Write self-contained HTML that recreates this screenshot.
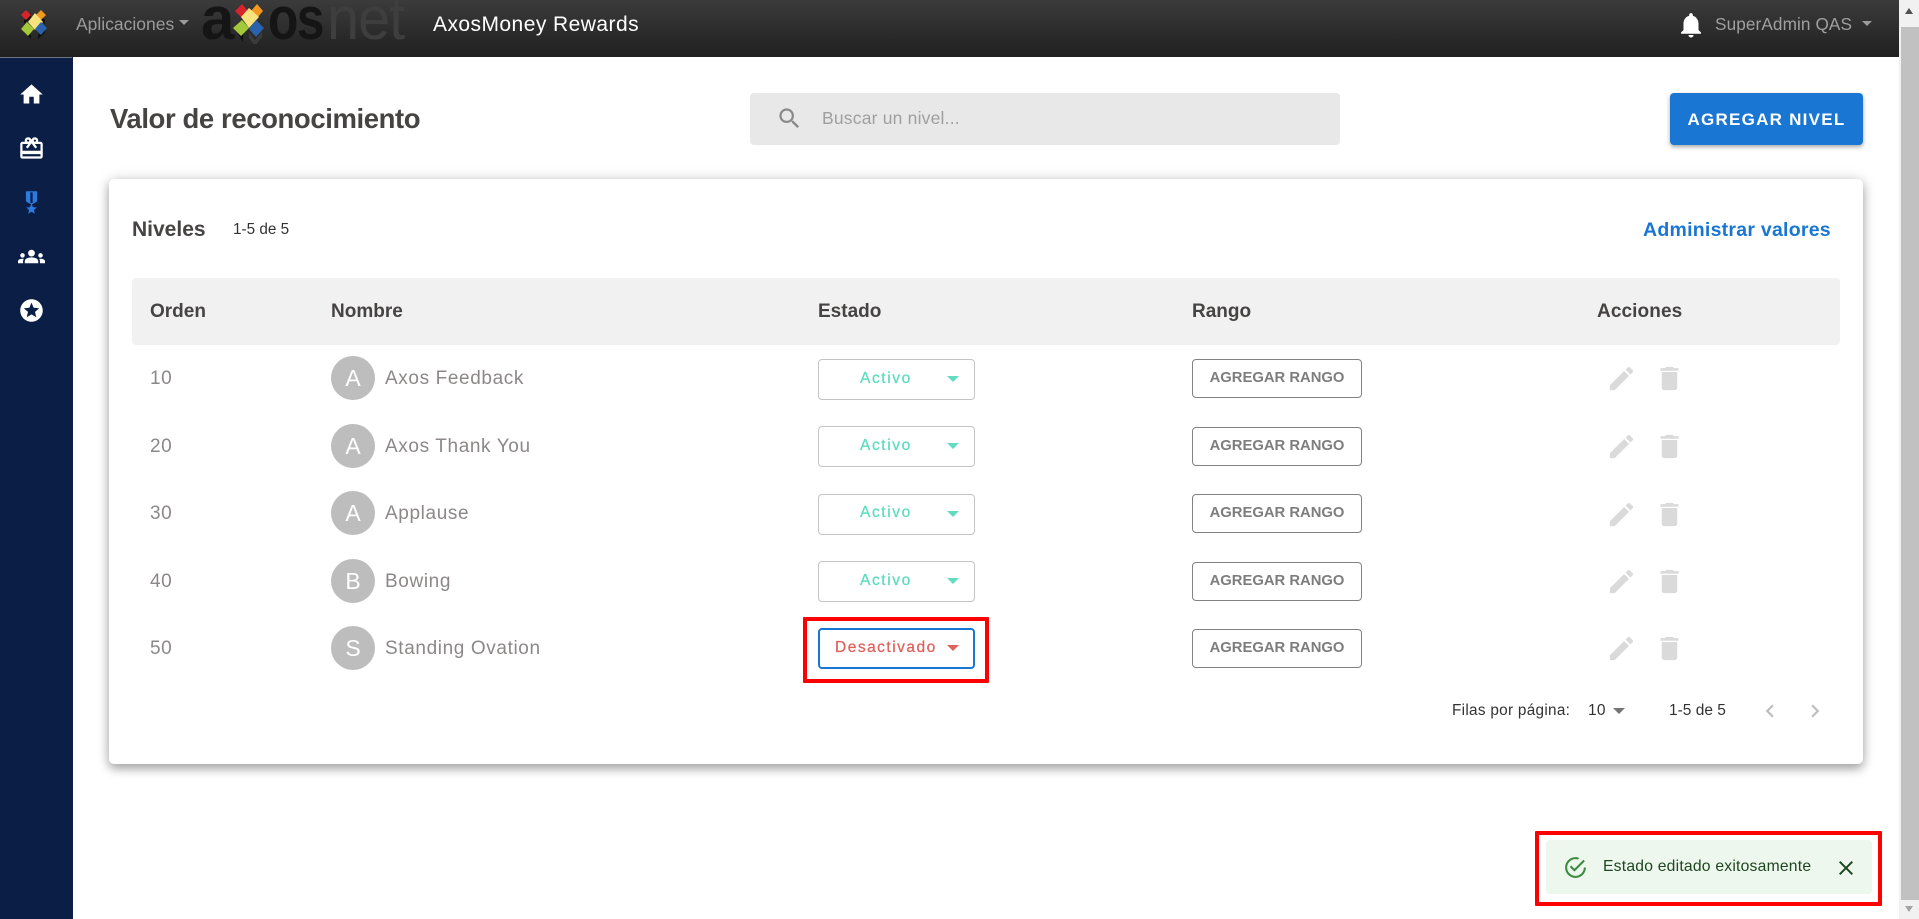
<!DOCTYPE html>
<html lang="es"><head><meta charset="utf-8"><title>AxosMoney Rewards</title>
<style>
html,body{margin:0;padding:0;width:1919px;height:919px;overflow:hidden;background:#fff;font-family:"Liberation Sans",sans-serif}
.a{position:absolute}
.t{position:absolute;white-space:nowrap;line-height:30px;height:30px}
svg{position:absolute;display:block}
.h{font-weight:bold;font-size:19px;color:#464343}
.n{font-size:19px;color:#8c8888;letter-spacing:.62px}
.av{position:absolute;left:331px;width:44px;height:44px;border-radius:50%;background:#bdbdbd;color:#fff;font-size:23px;line-height:44px;text-align:center}
.sel{position:absolute;left:818px;width:157px;height:41px;box-sizing:border-box;border:1.5px solid #c4c4c4;border-radius:4px}
.ac{font-size:15.5px;color:#5cdcbe;letter-spacing:1.6px;-webkit-text-stroke:.25px currentColor}
.car{position:absolute;width:0;height:0;border-left:6px solid transparent;border-right:6px solid transparent;border-top:6.5px solid #62dcc0}
.btn{position:absolute;left:1192px;width:170px;height:39px;box-sizing:border-box;border:1.5px solid #828282;border-radius:4px;color:#7d7d7d;font-weight:bold;font-size:14.8px;line-height:37px;text-align:center;white-space:nowrap}
</style></head><body>

<div class="a" style="left:0;top:0;width:1899px;height:57px;background:linear-gradient(#3b3b3b,#202020)"></div>
<div class="a" style="left:0;top:57px;width:73px;height:862px;background:#0a1e46"></div>
<div class="a" style="left:0;top:57px;width:72px;height:1px;background:#6f7480"></div>

<svg style="left:18px;top:8px" width="32" height="34" viewBox="0 0 32 34">
<g transform="translate(3,2)">
<polygon points="10,3 3,10 3,14 10,8" fill="#111"/><polygon points="17,3 24,10 24,14 17,8" fill="#111"/>
<polygon points="3,18 10,25 10,29 3,23" fill="#111"/><polygon points="24,18 17,25 17,29 24,23" fill="#111"/>
<polygon points="8,0 13,5 8,10 3,5" fill="#d9232a" transform="translate(-3,0)"/>
<polygon points="20,0 25,5 20,10 15,5" fill="#f29a1f"/>
<polygon points="14,3 22,12 14,20 7,12" fill="#f7e27e"/>
<polygon points="6,12 13,19 7,26 0,19" fill="#a3c93a"/>
<polygon points="20,12 26,18 20,25 14,19" fill="#2b62ad"/>
</g></svg>

<div class="t" style="left:76px;top:9px;font-size:17.5px;color:#9b9b9b">Aplicaciones</div>
<div class="car" style="left:179px;top:20px;border-top-color:#9b9b9b;border-left-width:5px;border-right-width:5px;border-top-width:5px"></div>

<div class="a" style="left:201px;top:-11px;font-size:60px;font-weight:bold;line-height:60px;color:#151515;letter-spacing:-1px">a</div>
<div class="a" style="left:268px;top:-11px;font-size:60px;font-weight:bold;line-height:60px;color:#151515;letter-spacing:-2px;transform-origin:left;transform:scaleX(.83)">os</div>
<div class="a" style="left:327px;top:-11px;font-size:60px;line-height:60px;color:#3e3e3e;letter-spacing:-1px;transform-origin:left;transform:scaleX(.96)">net</div>
<svg style="left:232px;top:4px" width="36" height="40" viewBox="0 0 36 40">
<polygon points="5,20 11,30 11,38 5,28" fill="#0e0e0e"/><polygon points="17,28 23,36 30,28 30,33 23,42 17,34" fill="#3b3b3b"/>
<polygon points="10,0 16,7 10,14 3,7" fill="#d9232a"/>
<polygon points="25,0 31,7 25,14 19,7" fill="#f29a1f"/>
<polygon points="17,4 27,13 17,24 9,13" fill="#f7e27e"/>
<polygon points="10,16 17,24 9,32 1,24" fill="#a3c93a"/>
<polygon points="24,16 32,24 24,33 17,25" fill="#2b62ad"/>
</svg>

<div class="t" style="left:433px;top:10px;font-size:21px;color:#fff;letter-spacing:.45px">AxosMoney Rewards</div>

<svg style="left:1676px;top:10px" width="30" height="30" viewBox="0 0 24 24"><path fill="#fff" d="M12 22c1.1 0 2-.9 2-2h-4c0 1.1.9 2 2 2zm6-6v-5c0-3.07-1.63-5.64-4.5-6.32V4c0-.83-.67-1.5-1.5-1.5s-1.5.67-1.5 1.5v.68C7.64 5.36 6 7.92 6 11v5l-2 2v1h16v-1l-2-2z"/></svg>
<div class="t" style="left:1715px;top:9px;font-size:17.2px;color:#9f9f9f;letter-spacing:.1px">SuperAdmin QAS</div>
<div class="car" style="left:1862px;top:21px;border-top-color:#9b9b9b;border-left-width:5px;border-right-width:5px;border-top-width:5px"></div>

<div class="a" style="left:1899px;top:0;width:20px;height:919px;background:#f1f1f1"></div>
<div class="a" style="left:1901px;top:27px;width:18px;height:873px;background:#c1c1c1"></div>
<div class="car" style="left:1905px;top:8px;border-top:0;border-bottom:6px solid #505050;border-left-width:4.5px;border-right-width:4.5px"></div>
<div class="car" style="left:1905px;top:906px;border-top:6px solid #a3a3a3;border-left-width:4.5px;border-right-width:4.5px"></div>

<svg style="left:18px;top:81px" width="27" height="27" viewBox="0 0 24 24"><path fill="#fff" d="M10 20v-6h4v6h5v-8h3L12 3 2 12h3v8z"/></svg>
<svg style="left:18px;top:135px" width="27" height="27" viewBox="0 0 24 24"><path fill="#fff" d="M20 6h-2.18c.11-.31.18-.65.18-1 0-1.66-1.34-3-3-3-1.05 0-1.96.54-2.5 1.35l-.5.67-.5-.68C10.96 2.54 10.05 2 9 2 7.34 2 6 3.34 6 5c0 .35.07.69.18 1H4c-1.11 0-1.99.89-1.99 2L2 19c0 1.11.89 2 2 2h16c1.11 0 2-.89 2-2V8c0-1.11-.89-2-2-2zm-5-2c.55 0 1 .45 1 1s-.45 1-1 1-1-.45-1-1 .45-1 1-1zM9 4c.55 0 1 .45 1 1s-.45 1-1 1-1-.45-1-1 .45-1 1-1zm11 15H4v-2h16v2zm0-5H4V8h5.08L7 10.83 8.62 12 11 8.76l1-1.36 1 1.36L15.38 12 17 10.83 14.92 8H20v6z"/></svg>
<svg style="left:18px;top:189px" width="27" height="27" viewBox="0 0 24 24"><path fill="#2f7ae0" d="M17 10.43V2H7v8.43c0 .35.18.68.49.86l4.18 2.51-.99 2.34-3.41.29 2.59 2.24L9.07 22 12 20.23 14.93 22l-.78-3.33 2.59-2.24-3.41-.29-.99-2.34 4.18-2.51c.3-.18.48-.5.48-.86zm-4 1.8l-1 .6-1-.6V3h2v9.23z"/></svg>
<svg style="left:18px;top:243px" width="27" height="27" viewBox="0 0 24 24"><path fill="#fff" d="M4,13c1.1,0,2-0.9,2-2c0-1.1-0.9-2-2-2s-2,0.9-2,2C2,12.1,2.9,13,4,13z M5.13,14.1C4.76,14.04,4.39,14,4,14 c-0.99,0-1.93,0.21-2.78,0.58C0.48,14.9,0,15.62,0,16.43V18l4.5,0v-1.61C4.5,15.56,4.73,14.78,5.13,14.1z M20,13c1.1,0,2-0.9,2-2 c0-1.1-0.9-2-2-2s-2,0.9-2,2C18,12.1,18.9,13,20,13z M24,16.43c0-0.81-0.48-1.53-1.22-1.85C21.93,14.21,20.99,14,20,14 c-0.39,0-0.76,0.04-1.13,0.1c0.4,0.68,0.63,1.46,0.63,2.29V18l4.5,0V16.43z M16.24,13.65c-1.17-0.52-2.61-0.9-4.24-0.9 c-1.63,0-3.07,0.39-4.24,0.9C6.68,14.13,6,15.21,6,16.39V18h12v-1.61C18,15.21,17.32,14.13,16.24,13.65z M12,12c1.66,0,3-1.34,3-3 c0-1.66-1.34-3-3-3S9,7.34,9,9C9,10.66,10.34,12,12,12z"/></svg>
<svg style="left:18px;top:297px" width="27" height="27" viewBox="0 0 24 24"><path fill="#fff" d="M11.99 2C6.47 2 2 6.48 2 12s4.47 10 9.99 10C17.52 22 22 17.52 22 12S17.52 2 11.99 2zm4.24 16L12 15.45 7.77 18l1.12-4.81-3.73-3.23 4.92-.42L12 5l1.92 4.53 4.92.42-3.73 3.23L16.23 18z"/></svg>

<div class="t" style="left:110px;top:104px;font-size:27.5px;font-weight:bold;color:#464343;letter-spacing:-.4px">Valor de reconocimiento</div>

<div class="a" style="left:750px;top:93px;width:590px;height:52px;background:#e8e8e8;border-radius:4px"></div>
<svg style="left:776px;top:105px" width="27" height="27" viewBox="0 0 24 24"><path fill="#8a8a8a" d="M15.5 14h-.79l-.28-.27C15.41 12.59 16 11.11 16 9.5 16 5.91 13.09 3 9.5 3S3 5.91 3 9.5 5.91 16 9.5 16c1.61 0 3.09-.59 4.23-1.57l.27.28v.79l5 4.99L20.49 19l-4.99-5zm-6 0C7.01 14 5 11.99 5 9.5S7.01 5 9.5 5 14 7.01 14 9.5 11.99 14 9.5 14z"/></svg>
<div class="t" style="left:822px;top:103px;font-size:17.5px;color:#9f9f9f;letter-spacing:.2px">Buscar un nivel...</div>

<div class="a" style="left:1670px;top:93px;width:193px;height:52px;background:#1976d2;border-radius:4px;box-shadow:0 2px 4px rgba(0,0,0,.35);color:#fff;font-weight:bold;font-size:17px;letter-spacing:1.25px;line-height:53px;text-align:center;white-space:nowrap">AGREGAR NIVEL</div>

<div class="a" style="left:109px;top:179px;width:1754px;height:585px;background:#fff;border-radius:5px;box-shadow:0 5px 10px rgba(0,0,0,.3),0 0 14px rgba(0,0,0,.14)"></div>

<div class="t" style="left:132px;top:215px;font-size:21px;font-weight:bold;color:#464343">Niveles</div>
<div class="t" style="left:233px;top:215px;font-size:15.3px;color:#333">1-5 de 5</div>
<div class="t" style="left:1643px;top:215px;font-size:19.5px;font-weight:bold;color:#1976d2;letter-spacing:.25px">Administrar valores</div>

<div class="a" style="left:132px;top:278px;width:1708px;height:67px;background:#f1f1f1;border-radius:4px"></div>
<div class="t h" style="left:150px;top:297px">Orden</div>
<div class="t h" style="left:331px;top:297px">Nombre</div>
<div class="t h" style="left:818px;top:297px">Estado</div>
<div class="t h" style="left:1192px;top:297px">Rango</div>
<div class="t h" style="left:1597px;top:297px;letter-spacing:.1px">Acciones</div>

<div class="t n" style="left:150px;top:364px">10</div>
<div class="av" style="top:356px">A</div>
<div class="t n" style="left:385px;top:364px">Axos Feedback</div>
<div class="sel" style="top:359px"></div><div class="t ac" style="left:860px;top:364px">Activo</div><div class="car" style="left:947px;top:376px"></div>
<div class="btn" style="top:359px">AGREGAR RANGO</div>
<svg style="left:1606px;top:363px" width="31" height="31" viewBox="0 0 24 24"><path fill="#dadada" d="M3 17.25V21h3.75L17.81 9.94l-3.75-3.75L3 17.25zM20.71 7.04c.39-.39.39-1.02 0-1.41l-2.34-2.34c-.39-.39-1.02-.39-1.41 0l-1.83 1.83 3.75 3.75 1.83-1.83z"/></svg>
<svg style="left:1654px;top:363px" width="31" height="31" viewBox="0 0 24 24"><path fill="#dadada" d="M6 19c0 1.1.9 2 2 2h8c1.1 0 2-.9 2-2V7H6v12zM19 4h-3.5l-1-1h-5l-1 1H5v2h14V4z"/></svg>

<div class="t n" style="left:150px;top:432px">20</div>
<div class="av" style="top:424px">A</div>
<div class="t n" style="left:385px;top:432px">Axos Thank You</div>
<div class="sel" style="top:426px"></div><div class="t ac" style="left:860px;top:431px">Activo</div><div class="car" style="left:947px;top:443px"></div>
<div class="btn" style="top:427px">AGREGAR RANGO</div>
<svg style="left:1606px;top:431px" width="31" height="31" viewBox="0 0 24 24"><path fill="#dadada" d="M3 17.25V21h3.75L17.81 9.94l-3.75-3.75L3 17.25zM20.71 7.04c.39-.39.39-1.02 0-1.41l-2.34-2.34c-.39-.39-1.02-.39-1.41 0l-1.83 1.83 3.75 3.75 1.83-1.83z"/></svg>
<svg style="left:1654px;top:431px" width="31" height="31" viewBox="0 0 24 24"><path fill="#dadada" d="M6 19c0 1.1.9 2 2 2h8c1.1 0 2-.9 2-2V7H6v12zM19 4h-3.5l-1-1h-5l-1 1H5v2h14V4z"/></svg>

<div class="t n" style="left:150px;top:499px">30</div>
<div class="av" style="top:491px">A</div>
<div class="t n" style="left:385px;top:499px">Applause</div>
<div class="sel" style="top:494px"></div><div class="t ac" style="left:860px;top:498px">Activo</div><div class="car" style="left:947px;top:511px"></div>
<div class="btn" style="top:494px">AGREGAR RANGO</div>
<svg style="left:1606px;top:499px" width="31" height="31" viewBox="0 0 24 24"><path fill="#dadada" d="M3 17.25V21h3.75L17.81 9.94l-3.75-3.75L3 17.25zM20.71 7.04c.39-.39.39-1.02 0-1.41l-2.34-2.34c-.39-.39-1.02-.39-1.41 0l-1.83 1.83 3.75 3.75 1.83-1.83z"/></svg>
<svg style="left:1654px;top:499px" width="31" height="31" viewBox="0 0 24 24"><path fill="#dadada" d="M6 19c0 1.1.9 2 2 2h8c1.1 0 2-.9 2-2V7H6v12zM19 4h-3.5l-1-1h-5l-1 1H5v2h14V4z"/></svg>

<div class="t n" style="left:150px;top:567px">40</div>
<div class="av" style="top:559px">B</div>
<div class="t n" style="left:385px;top:567px">Bowing</div>
<div class="sel" style="top:561px"></div><div class="t ac" style="left:860px;top:566px">Activo</div><div class="car" style="left:947px;top:578px"></div>
<div class="btn" style="top:562px">AGREGAR RANGO</div>
<svg style="left:1606px;top:566px" width="31" height="31" viewBox="0 0 24 24"><path fill="#dadada" d="M3 17.25V21h3.75L17.81 9.94l-3.75-3.75L3 17.25zM20.71 7.04c.39-.39.39-1.02 0-1.41l-2.34-2.34c-.39-.39-1.02-.39-1.41 0l-1.83 1.83 3.75 3.75 1.83-1.83z"/></svg>
<svg style="left:1654px;top:566px" width="31" height="31" viewBox="0 0 24 24"><path fill="#dadada" d="M6 19c0 1.1.9 2 2 2h8c1.1 0 2-.9 2-2V7H6v12zM19 4h-3.5l-1-1h-5l-1 1H5v2h14V4z"/></svg>

<div class="t n" style="left:150px;top:634px">50</div>
<div class="av" style="top:626px">S</div>
<div class="t n" style="left:385px;top:634px">Standing Ovation</div>
<div class="sel" style="top:628px;border:2px solid #1976d2"></div><div class="t ac" style="left:835px;top:633px;color:#e0605c;letter-spacing:1.5px">Desactivado</div><div class="car" style="left:947px;top:645px;border-top-color:#e0605c"></div>
<div class="btn" style="top:629px">AGREGAR RANGO</div>
<svg style="left:1606px;top:633px" width="31" height="31" viewBox="0 0 24 24"><path fill="#dadada" d="M3 17.25V21h3.75L17.81 9.94l-3.75-3.75L3 17.25zM20.71 7.04c.39-.39.39-1.02 0-1.41l-2.34-2.34c-.39-.39-1.02-.39-1.41 0l-1.83 1.83 3.75 3.75 1.83-1.83z"/></svg>
<svg style="left:1654px;top:633px" width="31" height="31" viewBox="0 0 24 24"><path fill="#dadada" d="M6 19c0 1.1.9 2 2 2h8c1.1 0 2-.9 2-2V7H6v12zM19 4h-3.5l-1-1h-5l-1 1H5v2h14V4z"/></svg>

<div class="a" style="left:803px;top:617px;width:186px;height:66px;box-sizing:border-box;border:4px solid #f00;border-radius:1px"></div>

<div class="t" style="left:1452px;top:695.5px;font-size:15.3px;color:#333;letter-spacing:.3px">Filas por página:</div>
<div class="t" style="left:1588px;top:695.5px;font-size:15.5px;color:#333;letter-spacing:.3px">10</div>
<div class="car" style="left:1613px;top:708px;border-top-color:#757575;border-left-width:6px;border-right-width:6px;border-top-width:6px"></div>
<div class="t" style="left:1669px;top:695.5px;font-size:15.5px;color:#333">1-5 de 5</div>
<svg style="left:1757px;top:698px" width="26" height="26" viewBox="0 0 24 24"><path fill="#bdbdbd" d="M15.41 7.41L14 6l-6 6 6 6 1.41-1.41L10.83 12z"/></svg>
<svg style="left:1802px;top:698px" width="26" height="26" viewBox="0 0 24 24"><path fill="#bdbdbd" d="M10 6L8.59 7.41 13.17 12l-4.58 4.59L10 18l6-6z"/></svg>

<div class="a" style="left:1546px;top:840px;width:326px;height:54px;background:#edf7ed;border-radius:4px"></div>
<svg style="left:1563px;top:855px" width="25" height="25" viewBox="0 0 24 24"><path fill="#3a8a40" d="M20,12A8,8 0 0,1 12,20A8,8 0 0,1 4,12A8,8 0 0,1 12,4C12.76,4 13.5,4.11 14.2,4.31L15.77,2.74C14.61,2.26 13.34,2 12,2A10,10 0 0,0 2,12A10,10 0 0,0 12,22A10,10 0 0,0 22,12M7.91,10.08L6.5,11.5L11,16L21,6L19.59,4.58L11,13.17L7.91,10.08Z"/></svg>
<div class="t" style="left:1603px;top:852px;font-size:15.7px;color:#1e4620;letter-spacing:.22px">Estado editado exitosamente</div>
<svg style="left:1834px;top:856px" width="24" height="24" viewBox="0 0 24 24"><path fill="#1e4620" d="M19 6.41L17.59 5 12 10.59 6.41 5 5 6.41 10.59 12 5 17.59 6.41 19 12 13.41 17.59 19 19 17.59 13.41 12z"/></svg>
<div class="a" style="left:1535px;top:831px;width:347px;height:75px;box-sizing:border-box;border:4px solid #f00;border-radius:1px"></div>

</body></html>
